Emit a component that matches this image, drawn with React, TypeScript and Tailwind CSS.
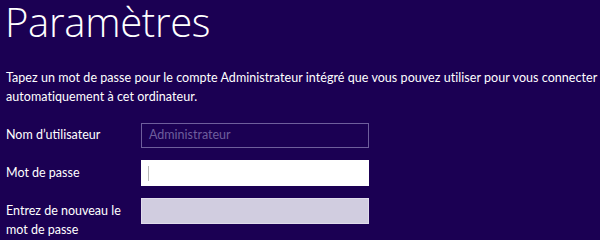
export default function App() {
  return (
    <div className="w-[600px] h-[240px] overflow-hidden bg-[#1b0053] text-white pl-[6px]" style={{ fontFamily: 'Lato, "Noto Sans", sans-serif' }}>
      <h1 className="text-[40px] leading-[44px] font-light -ml-[1px] tracking-[-0.3px]" style={{ fontFamily: '"Open Sans", "Noto Sans", sans-serif' }}>Paramètres</h1>
      <p className="mt-[24px] text-[12.5px] leading-[19px] tracking-[0.05px] whitespace-nowrap">
        Tapez un mot de passe pour le compte Administrateur intégré que vous pouvez utiliser pour vous connecter
        <br />
        automatiquement à cet ordinateur.
      </p>
      <div className="mt-[17px] flex flex-col gap-[12px]">
        <div className="flex items-center">
          <div className="w-[135px] text-[12.5px]">Nom d’utilisateur</div>
          <div className="w-[228px] h-[25px] border border-[#6e5e9c] flex items-center px-[7px] text-[12.5px] text-[#6e5e9c]">Administrateur</div>
        </div>
        <div className="flex items-center">
          <div className="w-[135px] text-[12.5px]">Mot de passe</div>
          <div className="w-[228px] h-[26px] bg-white flex items-center px-[7px]">
            <div className="w-[1px] h-[15px] bg-[#b8b8b8]" />
          </div>
        </div>
        <div className="flex items-start">
          <div className="w-[135px] text-[12.5px] leading-[19px] mt-[3px]">Entrez de nouveau le<br />mot de passe</div>
          <div className="w-[228px] h-[26px] bg-[#d1cde0] border border-[#e0dcec]" />
        </div>
      </div>
    </div>
  );
}
